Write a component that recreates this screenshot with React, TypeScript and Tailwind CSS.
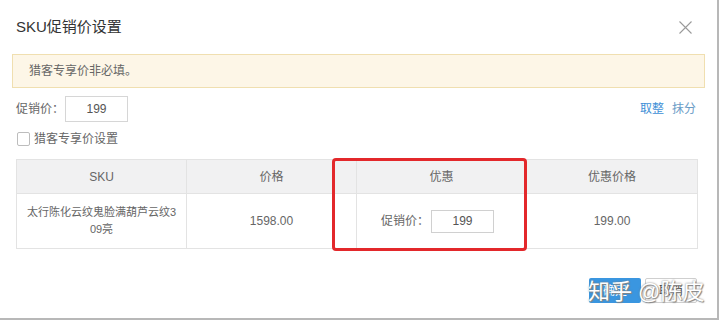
export default function App() {
  return (
    <div className="w-[720px] h-[323px] bg-white font-['Liberation_Sans','Noto_Sans_CJK_SC',sans-serif] text-[#333]">
      <div className="relative w-[719px] h-[320px] bg-white border-r-2 border-b-2 border-[#b8b8b8] flex flex-col">
        <div className="h-[54px] flex items-center justify-between pl-4 pr-[25px]">
          <span className="text-[15px] text-[#333]">SKU促销价设置</span>
          <svg width="13" height="13" viewBox="0 0 13 13" className="mt-[1px]">
            <path d="M0.5 0.5 L12.5 12.5 M12.5 0.5 L0.5 12.5" stroke="#9a9a9a" strokeWidth="1.1" fill="none" />
          </svg>
        </div>
        <div className="mx-3 h-[34px] bg-[#fdf6e7] border border-[#f0dfb0] flex items-center pl-4 text-[12px] text-[#666]">
          猎客专享价非必填。
        </div>
        <div className="mt-2 flex items-center justify-between pl-4 pr-[21px]">
          <div className="flex items-center text-[12px] text-[#666]">
            <span>促销价：</span>
            <div className="ml-[1px] w-[63px] h-[26px] border border-[#d6d6d6] flex items-center justify-center text-[12px] text-[#555]">
              199
            </div>
          </div>
          <div className="flex items-center gap-[8px] text-[12px]">
            <span className="text-[#3e8fd6]">取整</span>
            <span className="text-[#6a9cc6]">抹分</span>
          </div>
        </div>
        <div className="mt-2 flex items-center pl-[17px] text-[12px] text-[#666]">
          <div className="w-[13px] h-[14px] border border-[#bdbdbd] rounded-[2px] bg-white" />
          <span className="ml-[4px]">猎客专享价设置</span>
        </div>
        <div className="relative mt-[11px] mx-4 w-[682px] border border-[#e3e3e3] text-[12px] text-[#666]">
          <div className="grid grid-cols-4 h-[33px] bg-[#f1f1f2]">
            <div className="flex items-center justify-center border-r border-[#e3e3e3]">SKU</div>
            <div className="flex items-center justify-center border-r border-[#e3e3e3]">价格</div>
            <div className="flex items-center justify-center border-r border-[#e3e3e3]">优惠</div>
            <div className="flex items-center justify-center">优惠价格</div>
          </div>
          <div className="grid grid-cols-4 h-[55px] border-t border-[#e3e3e3]">
            <div className="flex items-center justify-center border-r border-[#e3e3e3] text-center text-[11px] leading-[17px] whitespace-nowrap">
              太行陈化云纹鬼脸满葫芦云纹3<br />09亮
            </div>
            <div className="flex items-center justify-center border-r border-[#e3e3e3]">1598.00</div>
            <div className="flex items-center justify-center border-r border-[#e3e3e3] pr-2">
              <span>促销价：</span>
              <div className="ml-[2px] w-[63px] h-[23px] border border-[#d0d0d0] flex items-center justify-center text-[#555]">
                199
              </div>
            </div>
            <div className="flex items-center justify-center">199.00</div>
          </div>
          <div className="absolute left-[315px] top-[-2px] w-[195px] h-[93px] border-[3px] border-[#e3282b] rounded-[4px]" />
        </div>
        <div className="mt-[29px] flex justify-end gap-[4px] pr-[20px] text-[12px]">
          <div className="w-[52px] h-[25px] bg-[#3a96e0] rounded-[2px] text-white flex items-center justify-center">确定</div>
          <div className="w-[52px] h-[25px] bg-white border border-[#cfcfcf] rounded-[2px] text-[#444] flex items-center justify-center">取消</div>
        </div>
        <div className="absolute left-[588px] top-[279px] text-[22px] leading-[26px] text-white [text-shadow:0_0_2px_#777,1px_1px_1px_#888]">
          知乎 @陈皮
        </div>
      </div>
    </div>
  );
}
